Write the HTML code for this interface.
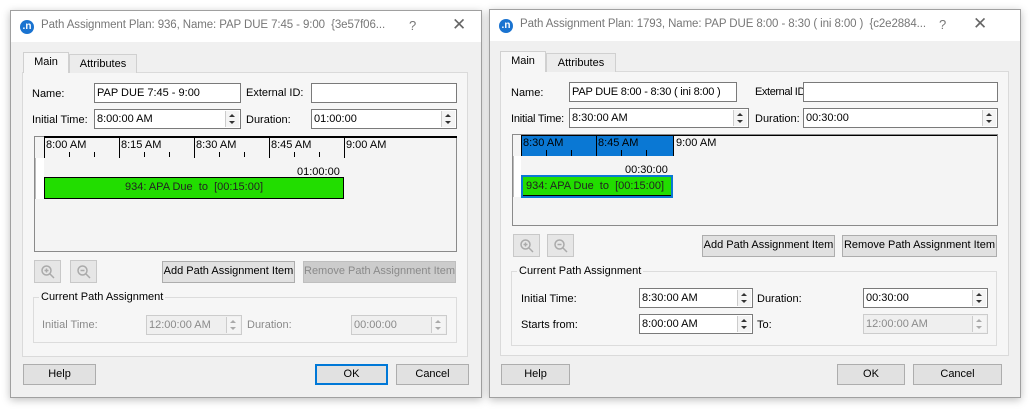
<!DOCTYPE html>
<html><head><meta charset="utf-8"><style>
*{box-sizing:border-box;margin:0;padding:0}
body{width:1030px;height:411px;background:#fff;position:relative;overflow:hidden;font-family:"Liberation Sans",sans-serif;font-size:11px;color:#000}
.a{position:absolute}
.dlg{position:absolute;background:#f0f0f0;border:1px solid #a0a0a0;box-shadow:0 2px 8px rgba(0,0,0,.25)}
.tb{position:absolute;left:0;top:0;right:0;height:31px;background:#fff;color:#777;font-size:11.5px}
.logo{position:absolute;width:14px;height:14px;border-radius:50%;background:#1a73d0;color:#fff;font-size:10px;font-weight:bold;text-align:center;line-height:13px}
.panel{position:absolute;background:#f6f6f6;border:1px solid #dadada}
.tab{position:absolute;border:1px solid #d0d0d0;border-bottom:none;text-align:center;line-height:18px}
.inp{position:absolute;background:#fff;border:1px solid #7a7a7a;padding-left:2px;line-height:18px;white-space:nowrap;overflow:hidden}
.dis{background:#efefef;border-color:#ccc;color:#8a8a8a}
.sp{position:absolute;right:1px;top:1px;bottom:1px;width:14px;border-left:1px solid #ccc;background:#f4f4f4}
.sp:before,.sp:after{content:"";position:absolute;left:3px;border-left:3px solid transparent;border-right:3px solid transparent}
.sp:before{top:3px;border-bottom:3px solid #333}
.sp:after{bottom:3px;border-top:3px solid #333}
.dis .sp:before{border-bottom-color:#aaa}.dis .sp:after{border-top-color:#aaa}
.btn{position:absolute;background:#e1e1e1;border:1px solid #adadad;text-align:center;line-height:19px;white-space:nowrap;overflow:hidden}
.lbl{position:absolute;white-space:nowrap}
.grp{position:absolute;border:1px solid #dcdcdc}
.gt{position:absolute;background:#f6f6f6;padding:0 2px;white-space:nowrap}
.zb{position:absolute;width:27px;height:23px;border:1px solid #c8c8c8;background:#e6e6e6}
.zb svg{position:absolute;left:5px;top:3px}
.tick{position:absolute;width:1px;background:#000}
.gl{color:#8a8a8a}
</style></head><body>

<!-- LEFT DIALOG -->
<div class="dlg" style="left:10px;top:10px;width:472px;height:388px">
 <div class="tb"><div class="logo" style="left:9px;top:9px">.n</div><div class="lbl" style="left:30px;top:8px;letter-spacing:-0.1px">Path Assignment Plan: 936, Name: PAP DUE 7:45 - 9:00 &nbsp;{3e57f06...</div><div class="lbl" style="left:398px;top:7px;font-size:13px">?</div><div class="lbl" style="left:441px;top:4px;font-size:17px;color:#666">✕</div></div>
</div>
<div class="panel" style="left:22px;top:72px;width:446px;height:285px"></div>
<div class="tab" style="left:23px;top:52px;width:46px;height:21px;background:#f6f6f6">Main</div>
<div class="tab" style="left:69px;top:54px;width:68px;height:19px;background:#ececec">Attributes</div>
<div class="lbl" style="left:32px;top:88px">Name:</div>
<div class="inp" style="left:94px;top:83px;width:147px;height:20px">PAP DUE 7:45 - 9:00</div>
<div class="lbl" style="left:246px;top:87px">External ID:</div>
<div class="inp" style="left:311px;top:83px;width:146px;height:20px"></div>
<div class="lbl" style="left:32px;top:114px">Initial Time:</div>
<div class="inp" style="left:94px;top:109px;width:147px;height:20px">8:00:00 AM<div class="sp"></div></div>
<div class="lbl" style="left:246px;top:114px">Duration:</div>
<div class="inp" style="left:311px;top:109px;width:146px;height:20px">01:00:00<div class="sp"></div></div>
<!-- timeline -->
<div class="a" style="left:34px;top:136px;width:423px;height:116px;background:#f4f4f4;border:1px solid #8a8a8a"></div>
<div class="a" style="left:44px;top:136px;width:413px;height:2px;background:#000"></div>
<div class="a" style="left:35px;top:158px;width:9px;height:41px;background:#fff;border-left:1px solid #bbb"></div>
<div class="tick" style="left:44px;top:137px;height:21px"></div>
<div class="tick" style="left:119px;top:137px;height:21px"></div>
<div class="tick" style="left:194px;top:137px;height:21px"></div>
<div class="tick" style="left:269px;top:137px;height:21px"></div>
<div class="tick" style="left:344px;top:137px;height:21px"></div>
<div class="tick" style="left:69px;top:152px;height:5px"></div><div class="tick" style="left:94px;top:152px;height:5px"></div>
<div class="tick" style="left:144px;top:152px;height:5px"></div><div class="tick" style="left:169px;top:152px;height:5px"></div>
<div class="tick" style="left:219px;top:152px;height:5px"></div><div class="tick" style="left:244px;top:152px;height:5px"></div>
<div class="tick" style="left:294px;top:152px;height:5px"></div><div class="tick" style="left:319px;top:152px;height:5px"></div>
<div class="lbl" style="left:46px;top:139px">8:00 AM</div>
<div class="lbl" style="left:121px;top:139px">8:15 AM</div>
<div class="lbl" style="left:196px;top:139px">8:30 AM</div>
<div class="lbl" style="left:271px;top:139px">8:45 AM</div>
<div class="lbl" style="left:346px;top:139px">9:00 AM</div>
<div class="lbl" style="left:297px;top:166px">01:00:00</div>
<div class="a" style="left:44px;top:177px;width:300px;height:22px;background:#22dd00;border:1px solid #000;text-align:center;line-height:19px;color:#222">934: APA Due &nbsp;to &nbsp;[00:15:00]</div>
<div class="zb" style="left:34px;top:260px"><svg width="16" height="16" viewBox="0 0 16 16"><circle cx="6.5" cy="6.5" r="4.5" fill="none" stroke="#aaa" stroke-width="1.5"/><path d="M10 10l4 4M4.5 6.5h4M6.5 4.5v4" stroke="#aaa" stroke-width="1.5"/></svg></div>
<div class="zb" style="left:70px;top:260px"><svg width="16" height="16" viewBox="0 0 16 16"><circle cx="6.5" cy="6.5" r="4.5" fill="none" stroke="#aaa" stroke-width="1.5"/><path d="M10 10l4 4M4.5 6.5h4" stroke="#aaa" stroke-width="1.5"/></svg></div>
<div class="btn" style="left:162px;top:261px;width:133px;height:22px">Add Path Assignment Item</div>
<div class="btn" style="left:303px;top:261px;width:153px;height:22px;background:#cccccc;border-color:#bfbfbf;color:#8a8a8a">Remove Path Assignment Item</div>
<div class="grp" style="left:33px;top:297px;width:424px;height:46px"></div>
<div class="gt" style="left:39px;top:291px">Current Path Assignment</div>
<div class="lbl gl" style="left:42px;top:319px">Initial Time:</div>
<div class="inp dis" style="left:146px;top:315px;width:96px;height:20px">12:00:00 AM<div class="sp"></div></div>
<div class="lbl gl" style="left:247px;top:319px">Duration:</div>
<div class="inp dis" style="left:351px;top:315px;width:96px;height:20px">00:00:00<div class="sp"></div></div>
<div class="btn" style="left:23px;top:364px;width:73px;height:21px">Help</div>
<div class="btn" style="left:315px;top:364px;width:73px;height:21px;border:2px solid #0078d7;line-height:17px">OK</div>
<div class="btn" style="left:396px;top:364px;width:73px;height:21px">Cancel</div>

<!-- RIGHT DIALOG -->
<div class="dlg" style="left:489px;top:9px;width:532px;height:389px">
 <div class="tb"><div class="logo" style="left:9px;top:9px">.n</div><div class="lbl" style="left:30px;top:8px;letter-spacing:-0.1px">Path Assignment Plan: 1793, Name: PAP DUE 8:00 - 8:30 ( ini 8:00 ) &nbsp;{c2e2884...</div><div class="lbl" style="left:449px;top:7px;font-size:13px">?</div><div class="lbl" style="left:483px;top:4px;font-size:17px;color:#666">✕</div></div>
</div>
<div class="panel" style="left:500px;top:71px;width:509px;height:285px"></div>
<div class="tab" style="left:500px;top:51px;width:46px;height:21px;background:#f6f6f6">Main</div>
<div class="tab" style="left:546px;top:53px;width:70px;height:19px;background:#ececec">Attributes</div>
<div class="lbl" style="left:511px;top:87px">Name:</div>
<div class="inp" style="left:569px;top:82px;width:168px;height:20px;letter-spacing:-0.2px">PAP DUE 8:00 - 8:30 ( ini 8:00 )</div>
<div class="lbl" style="left:755px;top:86px;letter-spacing:-0.4px">External ID:</div>
<div class="inp" style="left:803px;top:82px;width:195px;height:20px"></div>
<div class="lbl" style="left:511px;top:113px;letter-spacing:-0.2px">Initial Time:</div>
<div class="inp" style="left:569px;top:108px;width:180px;height:20px">8:30:00 AM<div class="sp"></div></div>
<div class="lbl" style="left:755px;top:113px">Duration:</div>
<div class="inp" style="left:803px;top:108px;width:195px;height:20px">00:30:00<div class="sp"></div></div>
<div class="a" style="left:512px;top:134px;width:486px;height:92px;background:#f4f4f4;border:1px solid #8a8a8a"></div>
<div class="a" style="left:521px;top:135px;width:476px;height:1px;background:#000"></div>
<div class="a" style="left:521px;top:136px;width:153px;height:20px;background:#0a78d4"></div>
<div class="tick" style="left:521px;top:135px;height:21px"></div>
<div class="tick" style="left:596px;top:135px;height:21px"></div>
<div class="tick" style="left:673px;top:135px;height:21px"></div>
<div class="tick" style="left:546px;top:150px;height:6px"></div><div class="tick" style="left:571px;top:150px;height:6px"></div>
<div class="tick" style="left:621px;top:150px;height:6px"></div><div class="tick" style="left:646px;top:150px;height:6px"></div>
<div class="lbl" style="left:523px;top:137px">8:30 AM</div>
<div class="lbl" style="left:598px;top:137px">8:45 AM</div>
<div class="lbl" style="left:676px;top:137px">9:00 AM</div>
<div class="a" style="left:513px;top:156px;width:8px;height:41px;background:#fff;border-left:1px solid #bbb"></div>
<div class="lbl" style="left:625px;top:164px">00:30:00</div>
<div class="a" style="left:521px;top:175px;width:152px;height:23px;background:#22dd00;border:2px solid #0a78d4;box-shadow:inset 0 -1px 0 #000;line-height:19px;padding-left:3px;color:#222">934: APA Due &nbsp;to &nbsp;[00:15:00]</div>
<div class="zb" style="left:513px;top:234px"><svg width="16" height="16" viewBox="0 0 16 16"><circle cx="6.5" cy="6.5" r="4.5" fill="none" stroke="#aaa" stroke-width="1.5"/><path d="M10 10l4 4M4.5 6.5h4M6.5 4.5v4" stroke="#aaa" stroke-width="1.5"/></svg></div>
<div class="zb" style="left:547px;top:234px"><svg width="16" height="16" viewBox="0 0 16 16"><circle cx="6.5" cy="6.5" r="4.5" fill="none" stroke="#aaa" stroke-width="1.5"/><path d="M10 10l4 4M4.5 6.5h4" stroke="#aaa" stroke-width="1.5"/></svg></div>
<div class="btn" style="left:702px;top:235px;width:133px;height:22px">Add Path Assignment Item</div>
<div class="btn" style="left:842px;top:235px;width:155px;height:22px">Remove Path Assignment Item</div>
<div class="grp" style="left:511px;top:271px;width:486px;height:75px"></div>
<div class="gt" style="left:517px;top:265px">Current Path Assignment</div>
<div class="lbl" style="left:521px;top:293px">Initial Time:</div>
<div class="inp" style="left:639px;top:288px;width:114px;height:20px">8:30:00 AM<div class="sp"></div></div>
<div class="lbl" style="left:757px;top:293px">Duration:</div>
<div class="inp" style="left:863px;top:288px;width:125px;height:20px">00:30:00<div class="sp"></div></div>
<div class="lbl" style="left:521px;top:319px">Starts from:</div>
<div class="inp" style="left:639px;top:314px;width:114px;height:20px">8:00:00 AM<div class="sp"></div></div>
<div class="lbl" style="left:757px;top:319px">To:</div>
<div class="inp dis" style="left:863px;top:314px;width:125px;height:20px">12:00:00 AM<div class="sp"></div></div>
<div class="btn" style="left:501px;top:364px;width:69px;height:21px">Help</div>
<div class="btn" style="left:837px;top:364px;width:68px;height:21px">OK</div>
<div class="btn" style="left:913px;top:364px;width:89px;height:21px">Cancel</div>
</body></html>
